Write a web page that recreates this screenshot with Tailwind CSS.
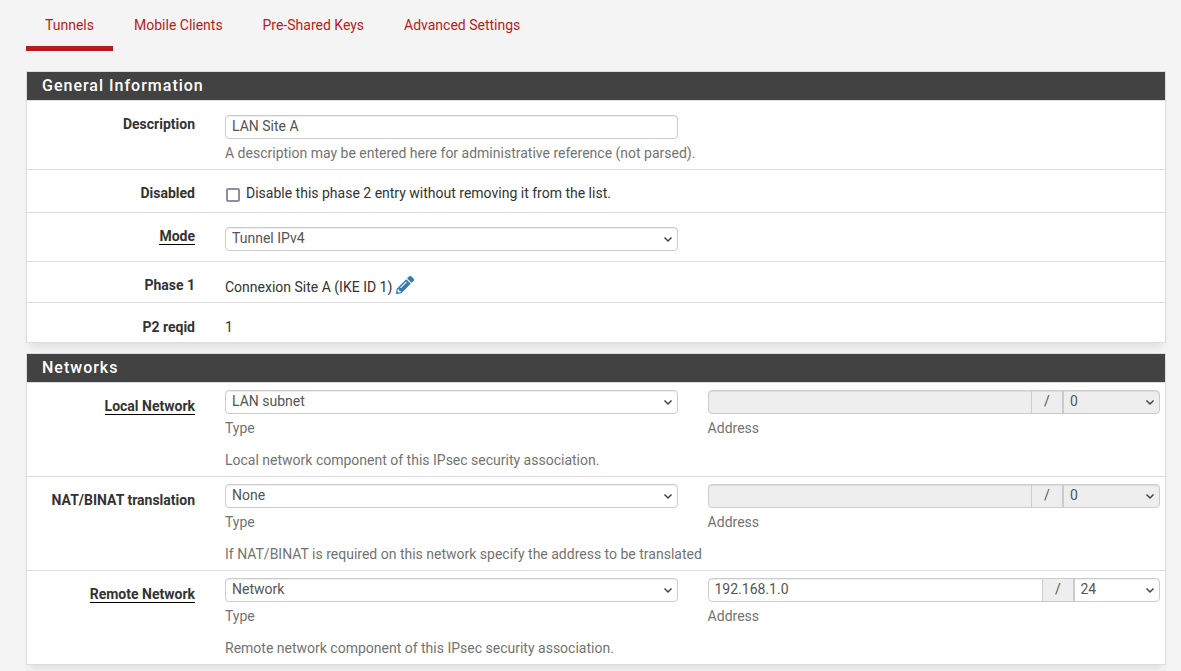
<!DOCTYPE html>
<html lang="en">
<head>
<meta charset="utf-8">
<title>IPsec Phase 2</title>
<script src="https://cdn.jsdelivr.net/npm/@tailwindcss/browser@4"></script>
</head>
<body class="h-[671px] overflow-hidden bg-[#f4f4f4] pl-[26px] pr-[15px] font-['Roboto',sans-serif] text-[14px] leading-5 text-[#333]">
<nav class="flex h-[71px] items-start text-[#b71c1c]">
  <a class="h-[51px] w-[87px] border-b-5 border-[#b71c1c] pl-[19px] pt-[15px]">Tunnels</a>
  <a class="ml-[21px] w-[128.500px] pt-[15px]">Mobile Clients</a>
  <a class="w-[141.500px] pt-[15px]">Pre-Shared Keys</a>
  <a class="pt-[15px]">Advanced Settings</a>
</nav>

<section class="mb-[10px] h-[272px] border border-[#ddd] bg-white shadow-[0_8px_8px_-4px_rgba(0,0,0,0.09)]">
  <h2 class="h-[29px] border-b border-[#ddd] bg-[#424242] pl-[15px] pt-1 text-[16px] leading-5 font-medium tracking-[1px] text-white">General Information</h2>
  <div class="flex h-[69px] border-b border-[#ddd]">
    <label class="w-[183px] pr-[15px] pt-[13px] text-right font-bold">Description</label>
    <div class="pl-[15px] pt-[14px]">
      <div class="h-6 w-[453px] rounded-[4px] border border-[#ccc] pl-[6px] text-[#555] shadow-[inset_0_1px_1px_rgba(0,0,0,0.075)]">LAN Site A</div>
      <p class="mt-1 text-[#737373]">A description may be entered here for administrative reference (not parsed).</p>
    </div>
  </div>
  <div class="flex h-[43px] border-b border-[#ddd]">
    <label class="w-[183px] pr-[15px] pt-[13px] text-right font-bold">Disabled</label>
    <div class="flex pl-4 pt-[13px]">
      <span class="mt-[5px] mr-[6px] size-[14px] rounded-[2px] border-2 border-[#8f8f9d] bg-white"></span>
      <span>Disable this phase 2 entry without removing it from the list.</span>
    </div>
  </div>
  <div class="flex h-[49px] border-b border-[#ddd]">
    <label class="w-[183px] pr-[15px] pt-[13px] text-right font-bold"><span class="inline-block h-[19px] border-b border-black">Mode</span></label>
    <div class="pl-[15px] pt-[14px]">
      <div class="flex h-6 w-[453px] justify-between rounded-[4px] border border-[#ccc] pl-[6px] pr-1 text-[#555] shadow-[inset_0_1px_1px_rgba(0,0,0,0.075)]"><span>Tunnel IPv4</span><svg class="mt-[6px] h-[10px] w-[10px]" viewBox="0 0 10 10" fill="none" stroke="#444" stroke-width="1.5"><path d="M1.500 3.500l3.500 3.500 3.500-3.500"/></svg></div>
    </div>
  </div>
  <div class="flex h-[41px] border-b border-[#ddd]">
    <label class="w-[183px] pr-[15px] pt-[13px] text-right font-bold">Phase 1</label>
    <div class="flex pl-[15px] pt-[14px]">
      <span class="pt-px">Connexion Site A (IKE ID 1)</span>
      <svg class="ml-1 size-[18px]" viewBox="0 0 512 512" fill="#337ab7"><path d="M497.900 142.100l-46.100 46.100c-4.700 4.700-12.300 4.700-17 0l-111-111c-4.700-4.700-4.700-12.300 0-17l46.100-46.100c18.700-18.700 49.100-18.700 67.900 0l60.100 60.100c18.800 18.700 18.800 49.100 0 67.900zM284.200 99.800L21.600 362.400.4 483.900c-2.900 16.400 11.400 30.600 27.800 27.800l121.500-21.300 262.600-262.600c4.700-4.700 4.700-12.300 0-17l-111-111c-4.800-4.700-12.400-4.700-17.100 0zM124.100 339.900c-5.500-5.500-5.500-14.300 0-19.800l154-154c5.500-5.500 14.300-5.500 19.800 0s5.500 14.300 0 19.800l-154 154c-5.500 5.500-14.300 5.500-19.800 0zM88 424h48v36.300l-64.500 11.300-31.100-31.100L51.700 376H88v48z"/></svg>
    </div>
  </div>
  <div class="flex">
    <label class="w-[183px] pr-[15px] pt-[14px] text-right font-bold">P2 reqid</label>
    <div class="pl-[15px] pt-[14px]">1</div>
  </div>
</section>

<section class="h-[312px] border border-[#ddd] bg-white shadow-[0_8px_8px_-4px_rgba(0,0,0,0.09)]">
  <h2 class="h-[29px] border-b border-[#ddd] bg-[#424242] pl-[15px] pt-1 text-[16px] leading-5 font-medium tracking-[1px] text-white">Networks</h2>
  <div class="flex h-[94px] border-b border-[#ddd]">
    <label class="w-[183px] pr-[15px] pt-[13px] text-right font-bold"><span class="inline-block h-[19px] border-b border-black">Local Network</span></label>
    <div class="pl-[15px] pt-[7px]">
      <div class="flex gap-[30px]">
        <div>
          <div class="flex h-6 w-[453px] justify-between rounded-[4px] border border-[#ccc] pl-[6px] pr-1 text-[#555] shadow-[inset_0_1px_1px_rgba(0,0,0,0.075)]"><span>LAN subnet</span><svg class="mt-[6px] h-[10px] w-[10px]" viewBox="0 0 10 10" fill="none" stroke="#444" stroke-width="1.5"><path d="M1.500 3.500l3.500 3.500 3.500-3.500"/></svg></div>
          <p class="mt-1 text-[#737373]">Type</p>
        </div>
        <div>
          <div class="flex h-6 w-[452px] overflow-hidden rounded-[4px] border border-[#ccc] bg-[#eee] text-[#555] shadow-[inset_0_1px_1px_rgba(0,0,0,0.075)]">
            <div class="w-[322px]"></div>
            <div class="w-[33px] border-l border-r-2 border-[#ccc] text-center">/</div>
            <div class="flex flex-1 justify-between pl-[6px] pr-1"><span>0</span><svg class="mt-[6px] h-[10px] w-[10px]" viewBox="0 0 10 10" fill="none" stroke="#444" stroke-width="1.5"><path d="M1.500 3.500l3.500 3.500 3.500-3.500"/></svg></div>
          </div>
          <p class="-ml-[0.400px] mt-1 text-[#737373]">Address</p>
        </div>
      </div>
      <p class="mt-3 text-[#737373]">Local network component of this IPsec security association.</p>
    </div>
  </div>
  <div class="flex h-[94px] border-b border-[#ddd]">
    <label class="w-[183px] pr-[15px] pt-[13px] text-right font-bold">NAT/BINAT translation</label>
    <div class="pl-[15px] pt-[7px]">
      <div class="flex gap-[30px]">
        <div>
          <div class="flex h-6 w-[453px] justify-between rounded-[4px] border border-[#ccc] pl-[6px] pr-1 text-[#555] shadow-[inset_0_1px_1px_rgba(0,0,0,0.075)]"><span>None</span><svg class="mt-[6px] h-[10px] w-[10px]" viewBox="0 0 10 10" fill="none" stroke="#444" stroke-width="1.5"><path d="M1.500 3.500l3.500 3.500 3.500-3.500"/></svg></div>
          <p class="mt-1 text-[#737373]">Type</p>
        </div>
        <div>
          <div class="flex h-6 w-[452px] overflow-hidden rounded-[4px] border border-[#ccc] bg-[#eee] text-[#555] shadow-[inset_0_1px_1px_rgba(0,0,0,0.075)]">
            <div class="w-[322px]"></div>
            <div class="w-[33px] border-l border-r-2 border-[#ccc] text-center">/</div>
            <div class="flex flex-1 justify-between pl-[6px] pr-1"><span>0</span><svg class="mt-[6px] h-[10px] w-[10px]" viewBox="0 0 10 10" fill="none" stroke="#444" stroke-width="1.5"><path d="M1.500 3.500l3.500 3.500 3.500-3.500"/></svg></div>
          </div>
          <p class="-ml-[0.400px] mt-1 text-[#737373]">Address</p>
        </div>
      </div>
      <p class="mt-3 text-[#737373]">If NAT/BINAT is required on this network specify the address to be translated</p>
    </div>
  </div>
  <div class="flex">
    <label class="w-[183px] pr-[15px] pt-[13px] text-right font-bold"><span class="inline-block h-[19px] border-b border-black">Remote Network</span></label>
    <div class="pl-[15px] pt-[7px]">
      <div class="flex gap-[30px]">
        <div>
          <div class="flex h-6 w-[453px] justify-between rounded-[4px] border border-[#ccc] pl-[6px] pr-1 text-[#555] shadow-[inset_0_1px_1px_rgba(0,0,0,0.075)]"><span>Network</span><svg class="mt-[6px] h-[10px] w-[10px]" viewBox="0 0 10 10" fill="none" stroke="#444" stroke-width="1.5"><path d="M1.500 3.500l3.500 3.500 3.500-3.500"/></svg></div>
          <p class="mt-1 text-[#737373]">Type</p>
        </div>
        <div>
          <div class="flex h-6 w-[452px] overflow-hidden rounded-[4px] border border-[#ccc] text-[#555] shadow-[inset_0_1px_1px_rgba(0,0,0,0.075)]">
            <div class="w-[333px] pl-[5.500px]">192.168.1.0</div>
            <div class="w-[33px] border-l border-r-2 border-[#ccc] bg-[#eee] text-center">/</div>
            <div class="flex flex-1 justify-between pl-[5.500px] pr-1"><span>24</span><svg class="mt-[6px] h-[10px] w-[10px]" viewBox="0 0 10 10" fill="none" stroke="#444" stroke-width="1.5"><path d="M1.500 3.500l3.500 3.500 3.500-3.500"/></svg></div>
          </div>
          <p class="-ml-[0.400px] mt-1 text-[#737373]">Address</p>
        </div>
      </div>
      <p class="mt-3 text-[#737373]">Remote network component of this IPsec security association.</p>
    </div>
  </div>
</section>
</body>
</html>
